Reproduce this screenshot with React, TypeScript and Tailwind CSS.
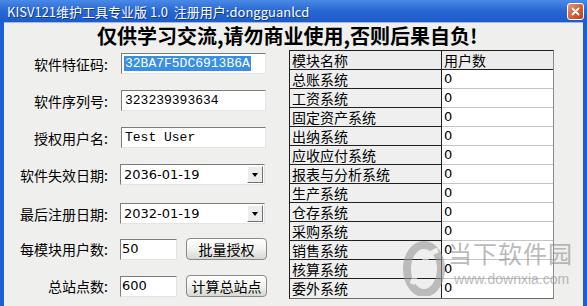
import React from 'react';

const cjk = '"Noto Sans CJK SC", "Liberation Sans", sans-serif';

const modules = [
  '总账系统',
  '工资系统',
  '固定资产系统',
  '出纳系统',
  '应收应付系统',
  '报表与分析系统',
  '生产系统',
  '仓存系统',
  '采购系统',
  '销售系统',
  '核算系统',
  '委外系统',
];

const Label: React.FC<{ text: string }> = ({ text }) => (
  <div className="w-[104px] shrink-0 text-right text-[14px] leading-none text-black" style={{ fontFamily: cjk }}>
    {text}
  </div>
);

const sunken =
  'border border-t-[#7c7c7c] border-l-[#7c7c7c] border-b-[#e4e4e4] border-r-[#e4e4e4] bg-white';

const DateSelect: React.FC<{ value: string }> = ({ value }) => (
  <div className={`${sunken} flex h-[21px] w-[145px] items-center`}>
    <span className="flex-1 pl-[3px] text-[13px] text-black font-['DejaVu_Sans',sans-serif] leading-none">{value}</span>
    <div className="mr-[1px] flex h-[17px] w-[16px] items-center justify-center border border-t-white border-l-white border-b-[#6f6f6f] border-r-[#6f6f6f] bg-[#ececec]">
      <div className="h-0 w-0 border-x-[3.5px] border-t-[4px] border-x-transparent border-t-black" />
    </div>
  </div>
);

const XpButton: React.FC<{ text: string }> = ({ text }) => (
  <button
    className="flex h-[22px] w-[81px] items-center justify-center rounded-[4px] border border-[#8a8a8a] bg-gradient-to-b from-white via-[#f2f2ee] to-[#d8d8d2] text-[14px] leading-none text-black"
    style={{ fontFamily: cjk }}
  >
    {text}
  </button>
);

export default function App() {
  return (
    <div className="relative flex h-[306px] w-[587px] flex-col overflow-hidden bg-[#1c5fd0]">
      {/* title bar */}
      <div className="flex h-[22px] shrink-0 items-center bg-gradient-to-b from-[#4a8ae6] via-[#2767d4] to-[#1d5cc8] pl-[7px] pr-[3px]">
        <span
          className="flex-1 text-[13px] leading-none text-white [text-shadow:1px_1px_0_#103c8a]"
          style={{ fontFamily: cjk }}
        >
          KISV121维护工具专业版 1.0&nbsp;&nbsp;注册用户:dongguanlcd
        </span>
        <div className="flex h-[17px] w-[17px] items-center justify-center rounded-[3px] border border-white bg-gradient-to-br from-[#ee9274] via-[#d5603a] to-[#b8421c]">
          <svg width="9" height="9" viewBox="0 0 9 9">
            <path d="M1.5 1.5 L7.5 7.5 M7.5 1.5 L1.5 7.5" stroke="white" strokeWidth="1.8" strokeLinecap="round" />
          </svg>
        </div>
      </div>

      {/* body */}
      <div className="relative mx-[4px] flex flex-1 flex-col border-t border-[#9fb9e8] bg-[#efefed]">
        <div
          className="mt-[1px] pl-[93px] text-[20px] font-bold leading-[24px] text-black"
          style={{ fontFamily: cjk }}
        >
          仅供学习交流,请勿商业使用,否则后果自负!
        </div>

        <div className="mt-[2px] flex">
          {/* form */}
          <div className="flex w-[285px] flex-col pt-[3px]">
            <div className="flex h-[21px] items-center gap-[13px]">
              <Label text="软件特征码:" />
              <div className={`${sunken} flex h-[21px] w-[145px] items-center pl-[2px]`}>
                <span className="bg-[#3a8ee6] px-[1px] text-[13px] leading-[15px] text-white font-['Liberation_Mono',monospace]">
                  32BA7F5DC6913B6A
                </span>
              </div>
            </div>

            <div className="mt-[16px] flex h-[21px] items-center gap-[13px]">
              <Label text="软件序列号:" />
              <div className={`${sunken} flex h-[21px] w-[145px] items-center pl-[3px] text-[13px] text-black font-['Liberation_Mono',monospace]`}>
                323239393634
              </div>
            </div>

            <div className="mt-[16px] flex h-[21px] items-center gap-[13px]">
              <Label text="授权用户名:" />
              <div className={`${sunken} flex h-[21px] w-[145px] items-center pl-[3px] text-[13px] text-black font-['Liberation_Mono',monospace]`}>
                Test User
              </div>
            </div>

            <div className="mt-[16px] flex h-[21px] items-center gap-[12px]">
              <Label text="软件失效日期:" />
              <DateSelect value="2036-01-19" />
            </div>

            <div className="mt-[18px] flex h-[21px] items-center gap-[12px]">
              <Label text="最后注册日期:" />
              <DateSelect value="2032-01-19" />
            </div>

            <div className="mt-[14px] flex h-[22px] items-center gap-[12px]">
              <Label text="每模块用户数:" />
              <div className={`${sunken} flex h-[21px] w-[57px] items-center pl-[1px] text-[13px] text-black font-['DejaVu_Sans',sans-serif]`}>
                50
              </div>
              <div className="ml-[-3px]">
                <XpButton text="批量授权" />
              </div>
            </div>

            <div className="mt-[15px] flex h-[22px] items-center gap-[12px]">
              <Label text="总站点数:" />
              <div className={`${sunken} flex h-[21px] w-[57px] items-center pl-[1px] text-[13px] text-black font-['DejaVu_Sans',sans-serif]`}>
                600
              </div>
              <div className="ml-[-3px]">
                <XpButton text="计算总站点" />
              </div>
            </div>
          </div>

          {/* module grid */}
          <div className="w-[265px] border border-t-[#202020] border-l-[#202020] border-r-[#8a8a8a] border-b-[#6a6a6a]" style={{ fontFamily: cjk }}>
            <div className="flex h-[19px] border-b border-[#202020] bg-[#ececec] text-[14px] leading-[18px] text-black">
              <div className="w-[152px] border-r border-[#202020] pl-[2px]">模块名称</div>
              <div className="flex-1 pl-[2px]">用户数</div>
            </div>
            {modules.map((m, i) => (
              <div key={m} className="flex h-[19px] text-[14px] leading-[18px] text-black">
                <div
                  className={`w-[152px] border-r border-[#202020] bg-[#efefef] pl-[2px] ${i < modules.length - 1 ? 'border-b border-b-[#202020]' : ''}`}
                >
                  {m}
                </div>
                <div
                  className={`flex-1 bg-white pl-[2px] text-[13px] font-['DejaVu_Sans',sans-serif] ${i < modules.length - 1 ? 'border-b border-[#c4c4c4]' : ''}`}
                >
                  0
                </div>
              </div>
            ))}
          </div>
        </div>

        {/* watermark */}
        <div className="pointer-events-none absolute left-[398px] top-[217px] flex items-start opacity-60">
          <svg width="44" height="56" viewBox="0 0 44 56">
            <ellipse cx="22" cy="29" rx="17" ry="24" fill="none" stroke="#9a9a9a" strokeWidth="8" />
            <path d="M10 44 Q22 14 36 10" stroke="#efefed" strokeWidth="5" fill="none" />
          </svg>
          <div className="ml-[2px] flex flex-col">
            <span className="text-[24px] leading-[26px] tracking-[1px] text-[#8f8f8f]" style={{ fontFamily: cjk }}>
              当下软件园
            </span>
            <span className="mt-[6px] pl-[6px] text-[14px] leading-none text-[#8f8f8f] font-['Liberation_Sans',sans-serif]">
              www.downxia.com
            </span>
          </div>
        </div>
      </div>
    </div>
  );
}
